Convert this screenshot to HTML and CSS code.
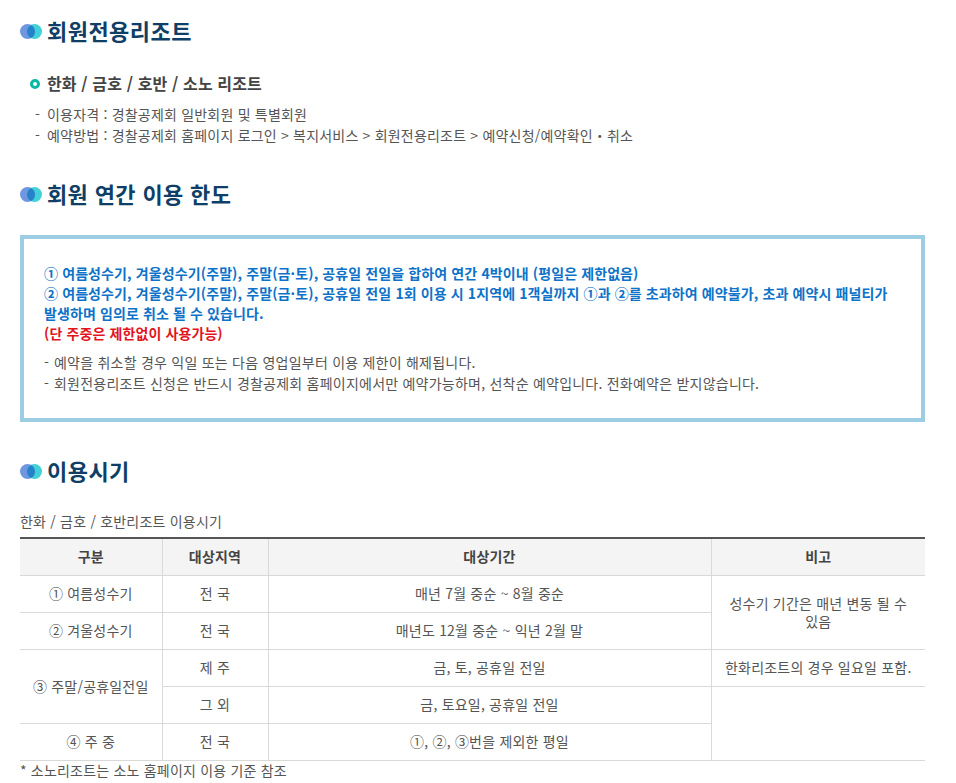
FILE: index.html
```html
<!DOCTYPE html>
<html lang="ko">
<head>
<meta charset="utf-8">
<title>회원전용리조트</title>
<link rel="stylesheet" href="styles.css">
</head>
<body>
<main class="page">
  <h2 class="title title-first"><svg class="dots" viewBox="0 0 22 15" width="22" height="15"><circle cx="7.5" cy="7.5" r="7.5" fill="#6f97e0"/><circle cx="14.5" cy="7.5" r="7.5" fill="#44d0d8"/><path d="M11 .88a7.5 7.5 0 0 1 0 13.24a7.5 7.5 0 0 1 0-13.24z" fill="#2582c8"/></svg>회원전용리조트</h2>
  <h3 class="sub"><span class="ring"></span>한화 / 금호 / 호반 / 소노 리조트</h3>
  <ul class="notes notes-top">
    <li>이용자격 : 경찰공제회 일반회원 및 특별회원</li>
    <li>예약방법 : 경찰공제회 홈페이지 로그인 &gt; 복지서비스 &gt; 회원전용리조트 &gt; 예약신청/예약확인・취소</li>
  </ul>
  <h2 class="title title-second"><svg class="dots" viewBox="0 0 22 15" width="22" height="15"><circle cx="7.5" cy="7.5" r="7.5" fill="#6f97e0"/><circle cx="14.5" cy="7.5" r="7.5" fill="#44d0d8"/><path d="M11 .88a7.5 7.5 0 0 1 0 13.24a7.5 7.5 0 0 1 0-13.24z" fill="#2582c8"/></svg>회원 연간 이용 한도</h2>
  <section class="box">
    <p class="blue">① 여름성수기, 겨울성수기(주말), 주말(금·토), 공휴일 전일을 합하여 연간 4박이내 (평일은 제한없음)<br>② 여름성수기, 겨울성수기(주말), 주말(금·토), 공휴일 전일 1회 이용 시 1지역에 1객실까지 ①과 ②를 초과하여 예약불가, 초과 예약시 패널티가 발생하며 임의로 취소 될 수 있습니다.</p>
    <p class="red">(단 주중은 제한없이 사용가능)</p>
    <ul class="notes notes-box">
      <li>예약을 취소할 경우 익일 또는 다음 영업일부터 이용 제한이 해제됩니다.</li>
      <li>회원전용리조트 신청은 반드시 경찰공제회 홈페이지에서만 예약가능하며, 선착순 예약입니다. 전화예약은 받지않습니다.</li>
    </ul>
  </section>
  <h2 class="title title-third"><svg class="dots" viewBox="0 0 22 15" width="22" height="15"><circle cx="7.5" cy="7.5" r="7.5" fill="#6f97e0"/><circle cx="14.5" cy="7.5" r="7.5" fill="#44d0d8"/><path d="M11 .88a7.5 7.5 0 0 1 0 13.24a7.5 7.5 0 0 1 0-13.24z" fill="#2582c8"/></svg>이용시기</h2>
  <p class="caption">한화 / 금호 / 호반리조트 이용시기</p>
  <table class="period">
    <colgroup><col class="c1"><col class="c2"><col class="c3"><col class="c4"></colgroup>
    <thead>
      <tr><th>구분</th><th>대상지역</th><th>대상기간</th><th class="last">비고</th></tr>
    </thead>
    <tbody>
      <tr><td>① 여름성수기</td><td>전 국</td><td>매년 7월 중순 ~ 8월 중순</td><td class="last" rowspan="2">성수기 기간은 매년 변동 될 수 있음</td></tr>
      <tr><td>② 겨울성수기</td><td>전 국</td><td>매년도 12월 중순 ~ 익년 2월 말</td></tr>
      <tr><td rowspan="2">③ 주말/공휴일전일</td><td>제 주</td><td>금, 토, 공휴일 전일</td><td class="last">한화리조트의 경우 일요일 포함.</td></tr>
      <tr><td>그 외</td><td>금, 토요일, 공휴일 전일</td><td class="last" rowspan="2"></td></tr>
      <tr><td>④ 주 중</td><td>전 국</td><td>①, ②, ③번을 제외한 평일</td></tr>
    </tbody>
  </table>
  <p class="foot">* 소노리조트는 소노 홈페이지 이용 기준 참조</p>
</main>
</body>
</html>
```
FILE: styles.css
```css
html, body { margin: 0; padding: 0; background: #fff; }
body {
  font-family: "Noto Sans CJK KR", "Noto Sans", sans-serif;
  font-size: 14px;
  letter-spacing: 0.2px;
  color: #555;
  height: 783px;
  overflow: hidden;
}
.page { width: 905px; margin-left: 20px; }
.title {
  display: flex;
  align-items: center;
  gap: 5px;
  margin: 0;
  font-size: 22px;
  line-height: 32px;
  font-weight: 700;
  letter-spacing: 0.45px;
  color: #0f3f66;
}
.dots { flex: none; margin-top: 2px; }
.title-first { padding-top: 14px; }
.title-second { margin-top: 31px; letter-spacing: 0.35px; }
.title-third { margin-top: 32px; }
.sub {
  display: flex;
  align-items: center;
  gap: 7px;
  margin: 25px 0 0 10px;
  font-size: 16px;
  line-height: 24px;
  font-weight: 700;
  letter-spacing: 0.14px;
  color: #444;
}
.ring {
  width: 10px;
  height: 10px;
  margin-top: 1px;
  box-sizing: border-box;
  border: 3px solid #0cb8a4;
  border-radius: 50%;
}
.notes { list-style: none; margin: 0; padding: 0; line-height: 21px; }
.notes li { position: relative; padding-left: 12px; }
.notes li::before { content: "-"; position: absolute; left: 0; }
.notes-top { margin: 9px 0 0 15px; }
.box {
  box-sizing: border-box;
  height: 187px;
  margin-top: 26px;
  padding: 24px 20px 0;
  border: 4px solid #9dcde3;
}
.blue, .red { margin: 0; font-weight: 700; line-height: 20px; letter-spacing: 0.11px; }
.blue { color: #0d72c8; }
.red { color: #e2141d; }
.notes-box { margin-top: 9px; letter-spacing: 0.23px; }
.notes-box li { padding-left: 10px; }
.caption { margin: 25px 0 0; line-height: 21px; }
.period {
  width: 905px;
  table-layout: fixed;
  border-collapse: collapse;
  border-top: 2px solid #555;
  text-align: center;
  margin-top: 5px;
}
.c1 { width: 142px; }
.c2 { width: 106px; }
.c3 { width: 443px; }
.c4 { width: 214px; }
.period th, .period td {
  border: 1px solid #d9d9d9;
  padding: 0 12px 2px;
  line-height: 18px;
  height: 34px;
  font-weight: 400;
}
.period th { background: #f4f4f4; font-weight: 700; color: #444; }
.period th:first-child, .period td:first-child { border-left: 0; }
.period .last { border-right: 0; }
.foot { margin: 0; line-height: 19px; }
```
